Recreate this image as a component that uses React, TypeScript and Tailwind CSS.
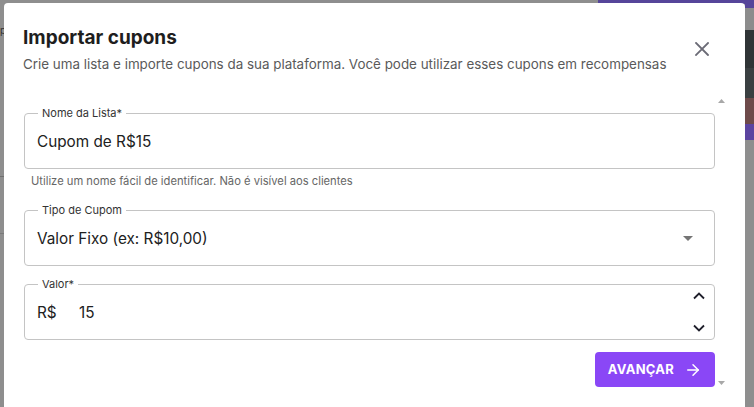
import React from "react";
import { ArrowRight } from "lucide-react";

function Field({
  label,
  children,
  right,
}: {
  label: string;
  children: React.ReactNode;
  right?: React.ReactNode;
}) {
  return (
    <div className="relative h-[56px] rounded-[4px] border border-[#c4c4c4] flex items-center pl-[12px] pr-[8px]">
      <span className="absolute left-[13px] top-[-8px] bg-white px-[4px] text-[11px] leading-[14px] text-[#333333]">
        {label}
      </span>
      <div className="flex-1 pt-[2px] text-[15.3px] text-[#212121]">{children}</div>
      {right}
    </div>
  );
}

export default function App() {
  return (
    <div
      className="relative w-[754px] h-[407px] overflow-hidden bg-[#8e8e8e]"
      style={{ fontFamily: "Inter, 'Noto Sans', sans-serif" }}
    >
      {/* backdrop content */}
      <div className="absolute left-[598px] top-0 w-[156px] h-[4px] bg-[#56459a]" />
      <div className="absolute right-0 top-0 w-[9px] h-[140px] flex flex-col">
        <div className="h-[8px] bg-[#56459a]" />
        <div className="h-[22px] bg-[#8c8c8c]" />
        <div className="h-[38px] bg-[#2f3436]" />
        <div className="h-[30px] bg-[#3a3f41]" />
        <div className="h-[26px] bg-[#6e4a4a]" />
        <div className="h-[16px] bg-[#5b44a0]" />
      </div>
      <div className="absolute left-0 top-[176px] w-[4px] h-[1px] bg-[#6f6f6f]" />
      <div className="absolute left-0 top-[233px] w-[4px] h-[1px] bg-[#7a7a7a]" />
      <div className="absolute left-0 top-[26px] w-[3px] h-[8px] text-[10px] leading-[8px] text-[#333]">
        p
      </div>

      {/* modal */}
      <div className="absolute left-[4px] top-[3px] w-[741px] h-[420px] bg-white rounded-[4px] flex flex-col">
        <div className="flex items-center pt-[21px] pl-[19px] pr-[36px]">
          <div className="flex-1">
            <div className="text-[19px] leading-[28px] font-bold text-[#1e1e1e]">
              Importar cupons
            </div>
            <div className="mt-[3px] text-[13.4px] leading-[18px] text-[#5a5a5a]">
              Crie uma lista e importe cupons da sua plataforma. Você pode
              utilizar esses cupons em recompensas
            </div>
          </div>
          <svg width="14" height="14" viewBox="0 0 14 14" className="shrink-0">
            <path
              d="M1 1 L13 13 M13 1 L1 13"
              stroke="#6b6b76"
              strokeWidth="1.8"
              strokeLinecap="square"
            />
          </svg>
        </div>

        <div className="mt-[22px] flex pl-[20px] pr-[18px]">
          <div className="flex-1 pt-[18px] flex flex-col">
            <Field label="Nome da Lista*">Cupom de R$15</Field>
            <div className="mt-[5px] pl-[7px] text-[11.2px] leading-[14px] text-[#666666]">
              Utilize um nome fácil de identificar. Não é visível aos clientes
            </div>
            <div className="mt-[22px]">
              <Field
                label="Tipo de Cupom"
                right={
                  <svg width="10" height="5" viewBox="0 0 10 5" className="mr-[13px]">
                    <path d="M0 0 L10 0 L5 5 Z" fill="#757575" />
                  </svg>
                }
              >
                Valor Fixo (ex: R$10,00)
              </Field>
            </div>
            <div className="mt-[18px]">
              <Field
                label="Valor*"
                right={
                  <div className="flex flex-col justify-between h-[40px] mr-[1px]">
                    <svg width="12" height="8" viewBox="0 0 12 8">
                      <path d="M1 6.5 L6 1.5 L11 6.5" fill="none" stroke="#1f1f2b" strokeWidth="1.8" />
                    </svg>
                    <svg width="12" height="8" viewBox="0 0 12 8">
                      <path d="M1 1.5 L6 6.5 L11 1.5" fill="none" stroke="#1f1f2b" strokeWidth="1.8" />
                    </svg>
                  </div>
                }
              >
                <span className="inline-block w-[42px]">R$</span>15
              </Field>
            </div>
            <div className="mt-[12px] flex justify-end">
              <button className="h-[35px] w-[120px] rounded-[4px] bg-[#8a47f6] text-white flex items-center justify-center gap-[10px] text-[13px] font-bold tracking-[0.02em]">
                AVANÇAR
                <ArrowRight size={18} strokeWidth={2} />
              </button>
            </div>
          </div>
          <div className="w-[12px] flex flex-col justify-between items-center pt-[4px] pb-[2px]">
            <svg width="7" height="4" viewBox="0 0 7 4">
              <path d="M0 4 L3.5 0 L7 4 Z" fill="#a8a8a8" />
            </svg>
            <svg width="7" height="4" viewBox="0 0 7 4">
              <path d="M0 0 L7 0 L3.5 4 Z" fill="#a8a8a8" />
            </svg>
          </div>
        </div>
      </div>
    </div>
  );
}
